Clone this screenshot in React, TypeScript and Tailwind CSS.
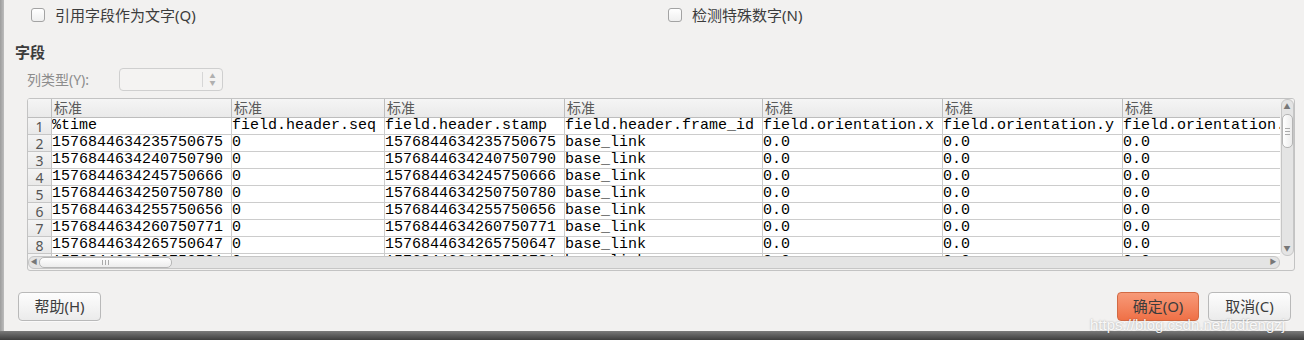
import React from "react"

const ui = { fontFamily: "'Noto Sans', 'Noto Sans CJK SC', sans-serif" }
const mono = { fontFamily: "'Liberation Mono', 'DejaVu Sans Mono', monospace" }

const colWidths = ["w-[180px]", "w-[153px]", "w-[180px]", "w-[198px]", "w-[180px]", "w-[180px]", "w-[200px]"]

const stamps = [
  "1576844634235750675",
  "1576844634240750790",
  "1576844634245750666",
  "1576844634250750780",
  "1576844634255750656",
  "1576844634260750771",
  "1576844634265750647",
  "1576844634270750781",
]

const rows: string[][] = [
  ["%time", "field.header.seq", "field.header.stamp", "field.header.frame_id", "field.orientation.x", "field.orientation.y", "field.orientation.z"],
  ...stamps.map((s) => [s, "0", s, "base_link", "0.0", "0.0", "0.0"]),
]

function Checkbox({ label }: { label: string }) {
  return (
    <label className="flex items-center gap-[10px] text-[15px] text-[#3c3c3c]">
      <span className="w-[14px] h-[14px] rounded-[3px] border border-[#a3a3a3] bg-gradient-to-b from-white to-[#efefef]" />
      {label}
    </label>
  )
}

function Button({ label, primary }: { label: string; primary?: boolean }) {
  return (
    <button
      className={
        "h-[29px] rounded-[4px] border text-[15px] text-[#3c3c3c] shadow-[0_1px_0_rgba(255,255,255,0.6)] " +
        (primary
          ? "w-[82px] border-[#d26a44] bg-gradient-to-b from-[#f79a78] to-[#ef7046]"
          : "w-[83px] border-[#b9b9b9] bg-gradient-to-b from-[#fdfdfd] to-[#ebebeb]")
      }
    >
      {label}
    </button>
  )
}

function Table() {
  return (
    <div className="ml-[23px] mt-[7px] w-[1268px] h-[173px] rounded-[3px] border border-[#c3c3c3] bg-[#f2f1f0] flex flex-col overflow-hidden">
      <div className="flex h-[157px]">
        <div className="w-[1252px] overflow-hidden bg-white">
          {/* header */}
          <div className="flex h-[19px] bg-gradient-to-b from-[#f5f5f5] to-[#e9e9e9]">
            <div className="w-[24px] shrink-0 border-r border-b border-[#bdbdbd]" />
            {colWidths.map((w, i) => (
              <div
                key={i}
                className={w + " shrink-0 border-r border-b border-[#bdbdbd] pl-[2px] text-[14px] leading-[18px] text-[#5a5a5a]"}
              >
                标准
              </div>
            ))}
          </div>
          {rows.map((r, ri) => (
            <div key={ri} className="flex h-[17px]">
              <div className="w-[24px] shrink-0 border-r border-b border-[#c6c6c6] bg-gradient-to-b from-[#f4f4f4] to-[#e9e9e9] text-center text-[14px] leading-[17px] text-[#555]" style={ui}>
                {ri + 1}
              </div>
              {r.map((c, ci) => (
                <div
                  key={ci}
                  className={colWidths[ci] + " shrink-0 border-r border-b border-[#cccccc] text-[15px] leading-[16px] text-black whitespace-nowrap overflow-hidden"}
                  style={mono}
                >
                  {c}
                </div>
              ))}
            </div>
          ))}
        </div>
        {/* vertical scrollbar */}
        <div className="w-[14px] bg-[#f2f1f0] flex justify-center">
          <div className="w-[13px] h-full rounded-[6px] border border-[#c6c6c6] bg-[#e4e4e4] flex flex-col items-center">
            <div className="h-[13px] text-[7px] leading-[13px] text-[#777]">▲</div>
            <div className="mt-[1px] w-[11px] h-[34px] rounded-[5px] border border-[#b5b5b5] bg-gradient-to-r from-white to-[#ececec] flex items-center justify-center">
              <div className="flex flex-col gap-[2px]">
                <div className="w-[5px] h-px bg-[#aaa]" />
                <div className="w-[5px] h-px bg-[#aaa]" />
                <div className="w-[5px] h-px bg-[#aaa]" />
              </div>
            </div>
            <div className="flex-1" />
            <div className="h-[13px] text-[7px] leading-[13px] text-[#777]">▼</div>
          </div>
        </div>
      </div>
      {/* horizontal scrollbar */}
      <div className="flex h-[14px]">
        <div className="w-[1252px] h-[13px] rounded-[6px] border border-[#c6c6c6] bg-[#e4e4e4] flex items-center">
          <div className="w-[10px] text-center text-[7px] text-[#777]">◀</div>
          <div className="w-[133px] h-[11px] rounded-[5px] border border-[#b5b5b5] bg-gradient-to-b from-white to-[#ececec] flex items-center justify-center gap-[2px]">
            <div className="w-px h-[5px] bg-[#aaa]" />
            <div className="w-px h-[5px] bg-[#aaa]" />
            <div className="w-px h-[5px] bg-[#aaa]" />
          </div>
          <div className="flex-1" />
          <div className="w-[12px] text-center text-[7px] text-[#777]">▶</div>
        </div>
        <div className="w-[14px]" />
      </div>
    </div>
  )
}

export default function App() {
  return (
    <div className="relative w-[1304px] h-[340px] overflow-hidden bg-[#a9a9a9]" style={ui}>
      <div className="flex h-[331px]">
        <div className="w-[4px] bg-gradient-to-r from-[#9d9d9d] to-[#bdbdbd]" />
        <div className="w-[1300px] bg-[#f2f1f0] flex flex-col">
          <div className="h-[30px] grid grid-cols-[637px_1fr] items-center pl-[27px]">
            <Checkbox label="引用字段作为文字(Q)" />
            <Checkbox label="检测特殊数字(N)" />
          </div>
          <div className="mt-[12px] h-[20px] pl-[11px] text-[15px] font-bold leading-[20px] text-[#3c3c3c]">字段</div>
          <div className="mt-[6px] h-[23px] flex items-center pl-[23px]">
            <div className="w-[92px] text-[14px] text-[#8c8c8c]">列类型(Y):</div>
            <div className="w-[104px] h-[23px] rounded-[4px] border border-[#cfcfcf] bg-[#f4f3f2] flex items-center justify-end">
              <div className="w-px h-[15px] bg-[#d6d6d6]" />
              <div className="w-[19px] flex flex-col items-center text-[6px] leading-[7px] text-[#b0b0b0]">
                <span>▲</span>
                <span>▼</span>
              </div>
            </div>
          </div>
          <Table />
          <div className="mt-[21px] flex items-center pl-[14px] pr-[13px]">
            <Button label="帮助(H)" />
            <div className="flex-1" />
            <div className="flex gap-[9px]">
              <Button label="确定(O)" primary />
              <Button label="取消(C)" />
            </div>
          </div>
        </div>
      </div>
      <div className="h-[9px] bg-gradient-to-b from-[#7a7a7a] to-[#3e3e3e]" />
      <div className="absolute left-[1090px] top-[314px] text-[15px] text-white/90 [text-shadow:0_0_2px_rgba(0,0,0,0.35)]" style={{ fontFamily: "'Liberation Sans', Arial, sans-serif" }}>
        https://blog.csdn.net/bdfengzj
      </div>
    </div>
  )
}
